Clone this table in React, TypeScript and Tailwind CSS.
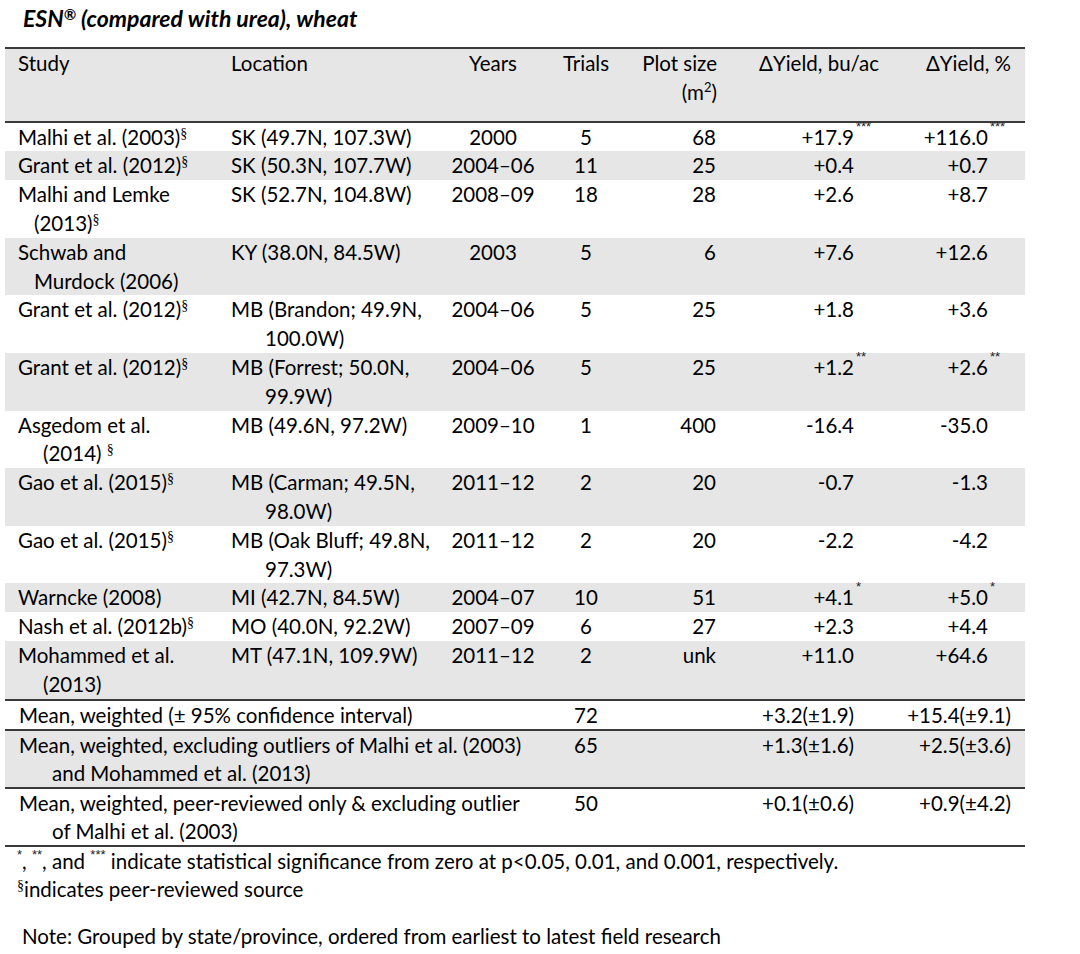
import React from "react";

const grid = "grid grid-cols-[210px_229px_98px_88px_101px_160px_134px]";

const Sec = () => (
  <span className="font-['Liberation_Serif',serif] text-[14px] leading-none align-[7px]">§</span>
);

function Num({ v, sup }: { v: string; sup?: string }) {
  return (
    <span className="relative">
      {v}
      {sup && (
        <span className="absolute left-full top-[-5px] ml-[2px] font-['Liberation_Sans',sans-serif] text-[13px] leading-none text-[#222]">
          {sup}
        </span>
      )}
    </span>
  );
}

type Row = {
  study: React.ReactNode[];
  indent?: number;
  loc: string[];
  years: string;
  trials: string;
  plot: string;
  bu: string;
  buSup?: string;
  pct: string;
  pctSup?: string;
};

const ROWS: Row[] = [
  { study: [<>Malhi et al. (2003)<Sec /></>], loc: ["SK (49.7N, 107.3W)"], years: "2000", trials: "5", plot: "68", bu: "+17.9", buSup: "***", pct: "+116.0", pctSup: "***" },
  { study: [<>Grant et al. (2012)<Sec /></>], loc: ["SK (50.3N, 107.7W)"], years: "2004–06", trials: "11", plot: "25", bu: "+0.4", pct: "+0.7" },
  { study: ["Malhi and Lemke", <>(2013)<Sec /></>], indent: 16, loc: ["SK (52.7N, 104.8W)"], years: "2008–09", trials: "18", plot: "28", bu: "+2.6", pct: "+8.7" },
  { study: ["Schwab and", "Murdock (2006)"], indent: 16, loc: ["KY (38.0N, 84.5W)"], years: "2003", trials: "5", plot: "6", bu: "+7.6", pct: "+12.6" },
  { study: [<>Grant et al. (2012)<Sec /></>], loc: ["MB (Brandon; 49.9N,", "100.0W)"], years: "2004–06", trials: "5", plot: "25", bu: "+1.8", pct: "+3.6" },
  { study: [<>Grant et al. (2012)<Sec /></>], loc: ["MB (Forrest; 50.0N,", "99.9W)"], years: "2004–06", trials: "5", plot: "25", bu: "+1.2", buSup: "**", pct: "+2.6", pctSup: "**" },
  { study: ["Asgedom et al.", <>(2014) <Sec /></>], indent: 25, loc: ["MB (49.6N, 97.2W)"], years: "2009–10", trials: "1", plot: "400", bu: "-16.4", pct: "-35.0" },
  { study: [<>Gao et al. (2015)<Sec /></>], loc: ["MB (Carman; 49.5N,", "98.0W)"], years: "2011–12", trials: "2", plot: "20", bu: "-0.7", pct: "-1.3" },
  { study: [<>Gao et al. (2015)<Sec /></>], loc: ["MB (Oak Bluff; 49.8N,", "97.3W)"], years: "2011–12", trials: "2", plot: "20", bu: "-2.2", pct: "-4.2" },
  { study: ["Warncke (2008)"], loc: ["MI (42.7N, 84.5W)"], years: "2004–07", trials: "10", plot: "51", bu: "+4.1", buSup: "*", pct: "+5.0", pctSup: "*" },
  { study: [<>Nash et al. (2012b)<Sec /></>], loc: ["MO (40.0N, 92.2W)"], years: "2007–09", trials: "6", plot: "27", bu: "+2.3", pct: "+4.4" },
  { study: ["Mohammed et al.", "(2013)"], indent: 25, loc: ["MT (47.1N, 109.9W)"], years: "2011–12", trials: "2", plot: "unk", bu: "+11.0", pct: "+64.6" },
];

const MEANS = [
  { label: ["Mean, weighted (± 95% confidence interval)"], trials: "72", bu: "+3.2(±1.9)", pct: "+15.4(±9.1)" },
  { label: ["Mean, weighted, excluding outliers of Malhi et al. (2003)", "and Mohammed et al. (2013)"], trials: "65", bu: "+1.3(±1.6)", pct: "+2.5(±3.6)" },
  { label: ["Mean, weighted, peer-reviewed only & excluding outlier", "of Malhi et al. (2003)"], trials: "50", bu: "+0.1(±0.6)", pct: "+0.9(±4.2)" },
];

const Star = ({ s }: { s: string }) => (
  <span className="font-['Liberation_Sans',sans-serif] text-[13px] leading-none align-[10px] text-[#222]">{s}</span>
);

export default function App() {
  return (
    <div className="w-[1080px] h-[954px] bg-white text-black font-['Lato',sans-serif] text-[20.5px] overflow-hidden">
      <h1 className="pl-[23px] pt-[6px] leading-[24px] text-[23px] font-bold italic whitespace-nowrap">
        ESN<span className="text-[15px] leading-none align-[7px]">®</span> (compared with urea), wheat
      </h1>

      <div className="ml-[5px] mt-[17px] w-[1020px]">
        {/* header */}
        <div className={`${grid} bg-[#e6e6e6] border-t-2 border-b-2 border-[#3a3a3a] leading-[28.8px] pb-[14px]`}>
          <div className="pl-[13px]">Study</div>
          <div className="pl-[16px]">Location</div>
          <div className="text-center">Years</div>
          <div className="text-center">Trials</div>
          <div className="text-right pr-[14px]">
            <div className="whitespace-nowrap">Plot size</div>
            <div>
              (m<span className="text-[13px] leading-none align-[8px]">2</span>)
            </div>
          </div>
          <div className="text-right pr-[12px] whitespace-nowrap">ΔYield, bu/ac</div>
          <div className="text-right pr-[14px] whitespace-nowrap">ΔYield, %</div>
        </div>

        {/* data rows */}
        {ROWS.map((r, i) => (
          <div
            key={i}
            className={`${grid} leading-[28.8px] whitespace-nowrap ${i % 2 === 1 ? "bg-[#e6e6e6]" : "bg-white"}`}
          >
            <div className="pl-[13px]">
              {r.study.map((s, j) => (
                <div key={j} className={j > 0 ? (r.indent === 25 ? "pl-[25px]" : "pl-[16px]") : ""}>
                  {s}
                </div>
              ))}
            </div>
            <div className="pl-[16px]">
              {r.loc.map((s, j) => (
                <div key={j} className={j > 0 ? "pl-[34px]" : ""}>
                  {s}
                </div>
              ))}
            </div>
            <div className="text-center">{r.years}</div>
            <div className="text-center">{r.trials}</div>
            <div className="text-right pr-[15px]">{r.plot}</div>
            <div className="text-right pr-[37px]">
              <Num v={r.bu} sup={r.buSup} />
            </div>
            <div className="text-right pr-[37px]">
              <Num v={r.pct} sup={r.pctSup} />
            </div>
          </div>
        ))}

        {/* means */}
        <div className="border-t-2 border-[#3a3a3a]">
          {MEANS.map((m, i) => (
            <div
              key={i}
              className={`${grid} leading-[28px] whitespace-nowrap border-b-2 border-[#3a3a3a] ${i === 1 ? "bg-[#e6e6e6]" : "bg-white"}`}
            >
              <div className="col-span-3 pl-[14px]">
                {m.label.map((s, j) => (
                  <div key={j} className={j > 0 ? "pl-[33px]" : ""}>
                    {s}
                  </div>
                ))}
              </div>
              <div className="text-center">{m.trials}</div>
              <div />
              <div className="text-right pr-[37px]">{m.bu}</div>
              <div className="text-right pr-[14px]">{m.pct}</div>
            </div>
          ))}
        </div>

        {/* footnotes */}
        <div className="leading-[28px] pl-[12px] whitespace-nowrap">
          <div>
            <Star s="*" />, <Star s="**" />, and <Star s="***" /> indicate statistical significance from zero at
            p&lt;0.05, 0.01, and 0.001, respectively.
          </div>
          <div>
            <span className="font-['Liberation_Serif',serif] text-[14px] leading-none align-[7px]">§</span>indicates
            peer-reviewed source
          </div>
          <div className="mt-[19px] pl-[5px]">
            Note: Grouped by state/province, ordered from earliest to latest field research
          </div>
        </div>
      </div>
    </div>
  );
}
